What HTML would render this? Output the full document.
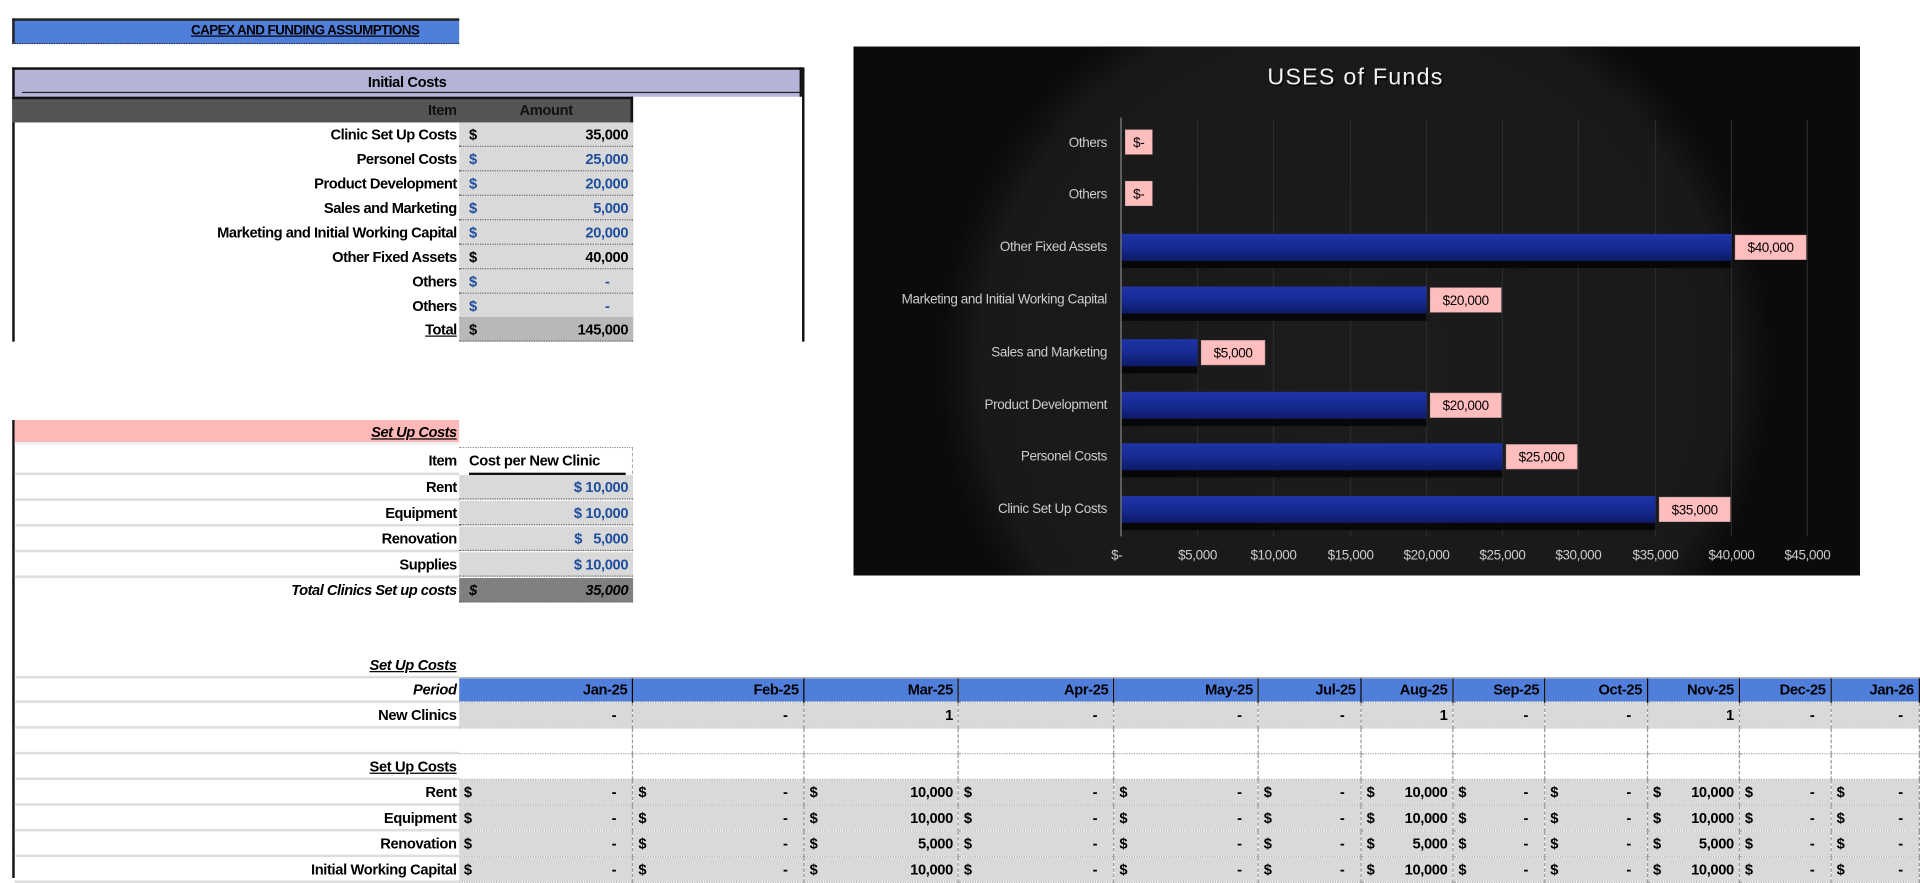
<!DOCTYPE html>
<html><head><meta charset="utf-8"><style>
html,body{margin:0;padding:0;width:1920px;height:878px;overflow:hidden;background:#fff}
#w{position:absolute;left:0;top:0;width:1568px;height:717px;transform:scale(1.22449);transform-origin:0 0;font-family:"Liberation Sans Narrow","Liberation Sans",sans-serif;font-weight:bold;font-size:12px;color:#000;letter-spacing:-0.3px}
.a{position:absolute;box-sizing:border-box}
.r{text-align:right}
.lbl{position:absolute;left:10px;width:363px;text-align:right;height:20px;line-height:20px;white-space:nowrap;letter-spacing:-0.4px}
.val{position:absolute;left:375px;width:142px;height:20px;line-height:20px;background:#d9d9d9;border-bottom:1px dotted #666;box-sizing:border-box;padding:0 4px}
.blue{color:#1f4e9c}
.val .d{float:left;margin-left:4px}
table.t{position:absolute;left:12px;top:533px;border-collapse:collapse;table-layout:fixed;font-size:12px}
table.t td{height:20px;padding:0 4px;box-sizing:border-box;white-space:nowrap;overflow:hidden;border-right:1px dashed #999;border-bottom:1px dotted #aaa}
table.t td.l{text-align:right;border-right:none;border-bottom:2px solid #ddd;padding-right:2px}
table.t tr.g td:not(.l){background:#d9d9d9}
table.t tr.h td:not(.l){background:#4f7fdb;border-right:1px solid #000;text-align:right}
table.t td .d{float:left}
table.t td .v{float:right}
</style></head><body><div id="w">

<div class="a" style="left:10px;top:15px;width:365px;height:21px;background:#4f7fdb;border-top:2px solid #222;border-left:2px solid #222;border-bottom:1px dotted #333"></div>
<div class="a" style="left:156px;top:17px;font-size:11px;text-decoration:underline;line-height:17px;letter-spacing:-0.5px">CAPEX AND FUNDING ASSUMPTIONS</div>

<div class="a" style="left:10px;top:55px;width:645px;height:24px;background:#b4b4d8;border-top:2px solid #111;border-left:2px solid #111;border-right:2px solid #111"></div>
<div class="a" style="left:18px;top:75px;width:637px;height:1px;background:#222"></div>
<div class="a" style="left:10px;top:58px;width:645px;text-align:center;line-height:18px">Initial Costs</div>
<div class="a" style="left:10px;top:79px;width:2px;height:200px;background:#111"></div>
<div class="a" style="left:655px;top:55px;width:2px;height:224px;background:#111"></div>
<div class="a" style="left:10px;top:79px;width:507px;height:21px;background:#545454;border-top:2px solid #111;border-right:2px solid #111"></div>
<div class="a" style="left:515px;top:79px;width:2px;height:200px;background:#111"></div>
<div class="a" style="left:300px;top:81px;width:73px;text-align:right;line-height:18px;color:#111">Item</div>
<div class="a" style="left:375px;top:81px;width:142px;text-align:center;line-height:18px;color:#111">Amount</div>

<div class="lbl" style="top:100px">Clinic Set Up Costs</div><div class="val r" style="top:100px"><span class="d">$</span>35,000</div>
<div class="lbl" style="top:120px">Personel Costs</div><div class="val r blue" style="top:120px"><span class="d">$</span>25,000</div>
<div class="lbl" style="top:140px">Product Development</div><div class="val r blue" style="top:140px"><span class="d">$</span>20,000</div>
<div class="lbl" style="top:160px">Sales and Marketing</div><div class="val r blue" style="top:160px"><span class="d">$</span>5,000</div>
<div class="lbl" style="top:180px">Marketing and Initial Working Capital</div><div class="val r blue" style="top:180px"><span class="d">$</span>20,000</div>
<div class="lbl" style="top:200px">Other Fixed Assets</div><div class="val r" style="top:200px"><span class="d">$</span>40,000</div>
<div class="lbl" style="top:220px">Others</div><div class="val r blue" style="top:220px"><span class="d">$</span>-&nbsp;&nbsp;&nbsp;&nbsp;&nbsp;</div>
<div class="lbl" style="top:240px">Others</div><div class="val r blue" style="top:240px"><span class="d">$</span>-&nbsp;&nbsp;&nbsp;&nbsp;&nbsp;</div>
<div class="lbl" style="top:259px"><u>Total</u></div><div class="val r" style="top:259px;background:#b8b8b8"><span class="d">$</span>145,000</div>

<div class="a" style="left:10px;top:343px;width:2px;height:374px;background:#111"></div>
<div class="a" style="left:12px;top:343px;width:363px;height:20px;background:#ffb8b8;border-bottom:2px solid #eee"></div>
<div class="lbl" style="top:343px;font-style:italic"><u>Set Up Costs</u></div>
<div class="a" style="left:12px;top:386px;width:363px;height:2px;background:#ddd"></div>
<div class="a" style="left:12px;top:407px;width:363px;height:2px;background:#ddd"></div>
<div class="a" style="left:12px;top:428px;width:363px;height:2px;background:#ddd"></div>
<div class="a" style="left:12px;top:449px;width:363px;height:2px;background:#ddd"></div>
<div class="a" style="left:12px;top:470px;width:363px;height:2px;background:#ddd"></div>
<div class="lbl" style="top:366px">Item</div>
<div class="a" style="left:375px;top:365px;width:142px;height:22px;border-top:1px dotted #888;border-right:1px dashed #aaa"></div>
<div class="a" style="left:383px;top:366px;line-height:20px;border-bottom:2px solid #111;width:128px">Cost per New Clinic</div>
<div class="lbl" style="top:388px">Rent</div><div class="val r blue" style="top:388px">$ 10,000</div>
<div class="lbl" style="top:409px">Equipment</div><div class="val r blue" style="top:409px">$ 10,000</div>
<div class="lbl" style="top:430px">Renovation</div><div class="val r blue" style="top:430px">$&nbsp;&nbsp;&nbsp;5,000</div>
<div class="lbl" style="top:451px">Supplies</div><div class="val r blue" style="top:451px">$ 10,000</div>
<div class="lbl" style="top:472px;font-style:italic">Total Clinics Set up costs</div><div class="val r" style="top:472px;background:#808080;font-style:italic"><span class="d">$</span>35,000</div>

<svg class="a" style="left:697px;top:38px;font-weight:normal" width="822" height="432" viewBox="0 0 822 432">
<defs>
<radialGradient id="rg" cx="0.5" cy="0.5" r="0.5"><stop offset="0" stop-color="#1c1c1c"/><stop offset="0.9" stop-color="#191919"/><stop offset="1" stop-color="#0c0a0a"/></radialGradient>
<linearGradient id="bg" x1="0" y1="0" x2="0" y2="1"><stop offset="0" stop-color="#1f35a8"/><stop offset="0.5" stop-color="#162a92"/><stop offset="1" stop-color="#0d1a66"/></linearGradient>
</defs>
<rect width="822" height="432" fill="#0c0a0a"/>
<ellipse cx="410" cy="260" rx="340" ry="330" fill="url(#rg)"/>
<g stroke="#2b2b2b" stroke-width="1">
<line x1="281" y1="60" x2="281" y2="400"/><line x1="343" y1="60" x2="343" y2="400"/><line x1="406" y1="60" x2="406" y2="400"/><line x1="468" y1="60" x2="468" y2="400"/><line x1="530" y1="60" x2="530" y2="400"/><line x1="592" y1="60" x2="592" y2="400"/><line x1="655" y1="60" x2="655" y2="400"/><line x1="717" y1="60" x2="717" y2="400"/><line x1="779" y1="60" x2="779" y2="400"/>
</g>
<line x1="218.5" y1="58" x2="218.5" y2="400" stroke="#888" stroke-width="1"/>
<text x="410" y="31" fill="#000" opacity="0.6" font-weight="normal" font-family="Liberation Sans Narrow, Liberation Sans, sans-serif" font-size="19" text-anchor="middle" letter-spacing="1" transform="translate(1.5,1.5)">USES of Funds</text>
<text x="410" y="31" fill="#f2f2f2" font-weight="normal" font-family="Liberation Sans Narrow, Liberation Sans, sans-serif" font-size="19" text-anchor="middle" letter-spacing="1">USES of Funds</text>
<g font-family="Liberation Sans Narrow, Liberation Sans, sans-serif" font-size="11" fill="#ccc" text-anchor="end" font-weight="normal" letter-spacing="-0.3">
<text x="207" y="82">Others</text><text x="207" y="124">Others</text><text x="207" y="167">Other Fixed Assets</text><text x="207" y="210">Marketing and Initial Working Capital</text><text x="207" y="253">Sales and Marketing</text><text x="207" y="296">Product Development</text><text x="207" y="338">Personel Costs</text><text x="207" y="381">Clinic Set Up Costs</text>
</g>
<g font-family="Liberation Sans Narrow, Liberation Sans, sans-serif" font-size="11" fill="#ccc" text-anchor="middle" font-weight="normal" letter-spacing="-0.3">
<text x="215" y="419">$-</text><text x="281" y="419">$5,000</text><text x="343" y="419">$10,000</text><text x="406" y="419">$15,000</text><text x="468" y="419">$20,000</text><text x="530" y="419">$25,000</text><text x="592" y="419">$30,000</text><text x="655" y="419">$35,000</text><text x="717" y="419">$40,000</text><text x="779" y="419">$45,000</text>
</g>
<g fill="#000" opacity="0.7"><rect x="219" y="175" width="498" height="6"/><rect x="219" y="218" width="249" height="6"/><rect x="219" y="261" width="62" height="6"/><rect x="219" y="304" width="249" height="6"/><rect x="219" y="346" width="311" height="6"/><rect x="219" y="389" width="436" height="6"/></g>
<g fill="url(#bg)">
<rect x="219" y="153" width="498" height="22"/><rect x="219" y="196" width="249" height="22"/><rect x="219" y="239" width="62" height="22"/><rect x="219" y="282" width="249" height="22"/><rect x="219" y="324" width="311" height="22"/><rect x="219" y="367" width="436" height="22"/>
</g>
<g fill="#ffbdbd" stroke="#c9a0a0" stroke-width="0.5">
<rect x="222" y="68" width="22" height="20"/><rect x="222" y="110" width="22" height="20"/>
<rect x="720" y="154" width="58" height="20"/><rect x="471" y="197" width="58" height="20"/><rect x="284" y="240" width="52" height="20"/><rect x="471" y="283" width="58" height="20"/><rect x="533" y="325" width="58" height="20"/><rect x="658" y="368" width="58" height="20"/>
</g>
<g font-family="Liberation Sans Narrow, Liberation Sans, sans-serif" font-size="11" fill="#000" text-anchor="middle" font-weight="normal" letter-spacing="-0.3">
<text x="233" y="82">$-</text><text x="233" y="124">$-</text><text x="749" y="168">$40,000</text><text x="500" y="211">$20,000</text><text x="310" y="254">$5,000</text><text x="500" y="297">$20,000</text><text x="562" y="339">$25,000</text><text x="687" y="382">$35,000</text>
</g>
</svg>

<table class="t">
<colgroup><col style="width:363px"><col style="width:142px"><col style="width:140px"><col style="width:126px"><col style="width:127px"><col style="width:118px"><col style="width:84px"><col style="width:75px"><col style="width:75px"><col style="width:84px"><col style="width:75px"><col style="width:75px"><col style="width:72px"></colgroup>
<tr style="height:19px"><td class="l" style="font-style:italic"><u>Set Up Costs</u></td><td colspan="12" style="border:none;border-bottom:1px solid #aaa"></td></tr>
<tr class="h"><td class="l" style="font-style:italic">Period</td><td>Jan-25</td><td>Feb-25</td><td>Mar-25</td><td>Apr-25</td><td>May-25</td><td>Jul-25</td><td>Aug-25</td><td>Sep-25</td><td>Oct-25</td><td>Nov-25</td><td>Dec-25</td><td>Jan-26</td></tr>
<tr class="g" style="height:21px"><td class="l">New Clinics</td><td class="r">-&nbsp;&nbsp;&nbsp;</td><td class="r">-&nbsp;&nbsp;&nbsp;</td><td class="r">1</td><td class="r">-&nbsp;&nbsp;&nbsp;</td><td class="r">-&nbsp;&nbsp;&nbsp;</td><td class="r">-&nbsp;&nbsp;&nbsp;</td><td class="r">1</td><td class="r">-&nbsp;&nbsp;&nbsp;</td><td class="r">-&nbsp;&nbsp;&nbsp;</td><td class="r">1</td><td class="r">-&nbsp;&nbsp;&nbsp;</td><td class="r">-&nbsp;&nbsp;&nbsp;</td></tr>
<tr style="height:21px"><td class="l"></td><td></td><td></td><td></td><td></td><td></td><td></td><td></td><td></td><td></td><td></td><td></td><td></td></tr>
<tr style="height:21px"><td class="l"><u>Set Up Costs</u></td><td></td><td></td><td></td><td></td><td></td><td></td><td></td><td></td><td></td><td></td><td></td><td></td></tr>
<tr class="g" style="height:21px"><td class="l">Rent</td><td><span class="d">$</span><span class="v">-&nbsp;&nbsp;&nbsp;</span></td><td><span class="d">$</span><span class="v">-&nbsp;&nbsp;&nbsp;</span></td><td><span class="d">$</span><span class="v">10,000</span></td><td><span class="d">$</span><span class="v">-&nbsp;&nbsp;&nbsp;</span></td><td><span class="d">$</span><span class="v">-&nbsp;&nbsp;&nbsp;</span></td><td><span class="d">$</span><span class="v">-&nbsp;&nbsp;&nbsp;</span></td><td><span class="d">$</span><span class="v">10,000</span></td><td><span class="d">$</span><span class="v">-&nbsp;&nbsp;&nbsp;</span></td><td><span class="d">$</span><span class="v">-&nbsp;&nbsp;&nbsp;</span></td><td><span class="d">$</span><span class="v">10,000</span></td><td><span class="d">$</span><span class="v">-&nbsp;&nbsp;&nbsp;</span></td><td><span class="d">$</span><span class="v">-&nbsp;&nbsp;&nbsp;</span></td></tr>
<tr class="g" style="height:21px"><td class="l">Equipment</td><td><span class="d">$</span><span class="v">-&nbsp;&nbsp;&nbsp;</span></td><td><span class="d">$</span><span class="v">-&nbsp;&nbsp;&nbsp;</span></td><td><span class="d">$</span><span class="v">10,000</span></td><td><span class="d">$</span><span class="v">-&nbsp;&nbsp;&nbsp;</span></td><td><span class="d">$</span><span class="v">-&nbsp;&nbsp;&nbsp;</span></td><td><span class="d">$</span><span class="v">-&nbsp;&nbsp;&nbsp;</span></td><td><span class="d">$</span><span class="v">10,000</span></td><td><span class="d">$</span><span class="v">-&nbsp;&nbsp;&nbsp;</span></td><td><span class="d">$</span><span class="v">-&nbsp;&nbsp;&nbsp;</span></td><td><span class="d">$</span><span class="v">10,000</span></td><td><span class="d">$</span><span class="v">-&nbsp;&nbsp;&nbsp;</span></td><td><span class="d">$</span><span class="v">-&nbsp;&nbsp;&nbsp;</span></td></tr>
<tr class="g" style="height:21px"><td class="l">Renovation</td><td><span class="d">$</span><span class="v">-&nbsp;&nbsp;&nbsp;</span></td><td><span class="d">$</span><span class="v">-&nbsp;&nbsp;&nbsp;</span></td><td><span class="d">$</span><span class="v">5,000</span></td><td><span class="d">$</span><span class="v">-&nbsp;&nbsp;&nbsp;</span></td><td><span class="d">$</span><span class="v">-&nbsp;&nbsp;&nbsp;</span></td><td><span class="d">$</span><span class="v">-&nbsp;&nbsp;&nbsp;</span></td><td><span class="d">$</span><span class="v">5,000</span></td><td><span class="d">$</span><span class="v">-&nbsp;&nbsp;&nbsp;</span></td><td><span class="d">$</span><span class="v">-&nbsp;&nbsp;&nbsp;</span></td><td><span class="d">$</span><span class="v">5,000</span></td><td><span class="d">$</span><span class="v">-&nbsp;&nbsp;&nbsp;</span></td><td><span class="d">$</span><span class="v">-&nbsp;&nbsp;&nbsp;</span></td></tr>
<tr class="g" style="height:21px"><td class="l">Initial Working Capital</td><td><span class="d">$</span><span class="v">-&nbsp;&nbsp;&nbsp;</span></td><td><span class="d">$</span><span class="v">-&nbsp;&nbsp;&nbsp;</span></td><td><span class="d">$</span><span class="v">10,000</span></td><td><span class="d">$</span><span class="v">-&nbsp;&nbsp;&nbsp;</span></td><td><span class="d">$</span><span class="v">-&nbsp;&nbsp;&nbsp;</span></td><td><span class="d">$</span><span class="v">-&nbsp;&nbsp;&nbsp;</span></td><td><span class="d">$</span><span class="v">10,000</span></td><td><span class="d">$</span><span class="v">-&nbsp;&nbsp;&nbsp;</span></td><td><span class="d">$</span><span class="v">-&nbsp;&nbsp;&nbsp;</span></td><td><span class="d">$</span><span class="v">10,000</span></td><td><span class="d">$</span><span class="v">-&nbsp;&nbsp;&nbsp;</span></td><td><span class="d">$</span><span class="v">-&nbsp;&nbsp;&nbsp;</span></td></tr>
</table>

</div></body></html>
